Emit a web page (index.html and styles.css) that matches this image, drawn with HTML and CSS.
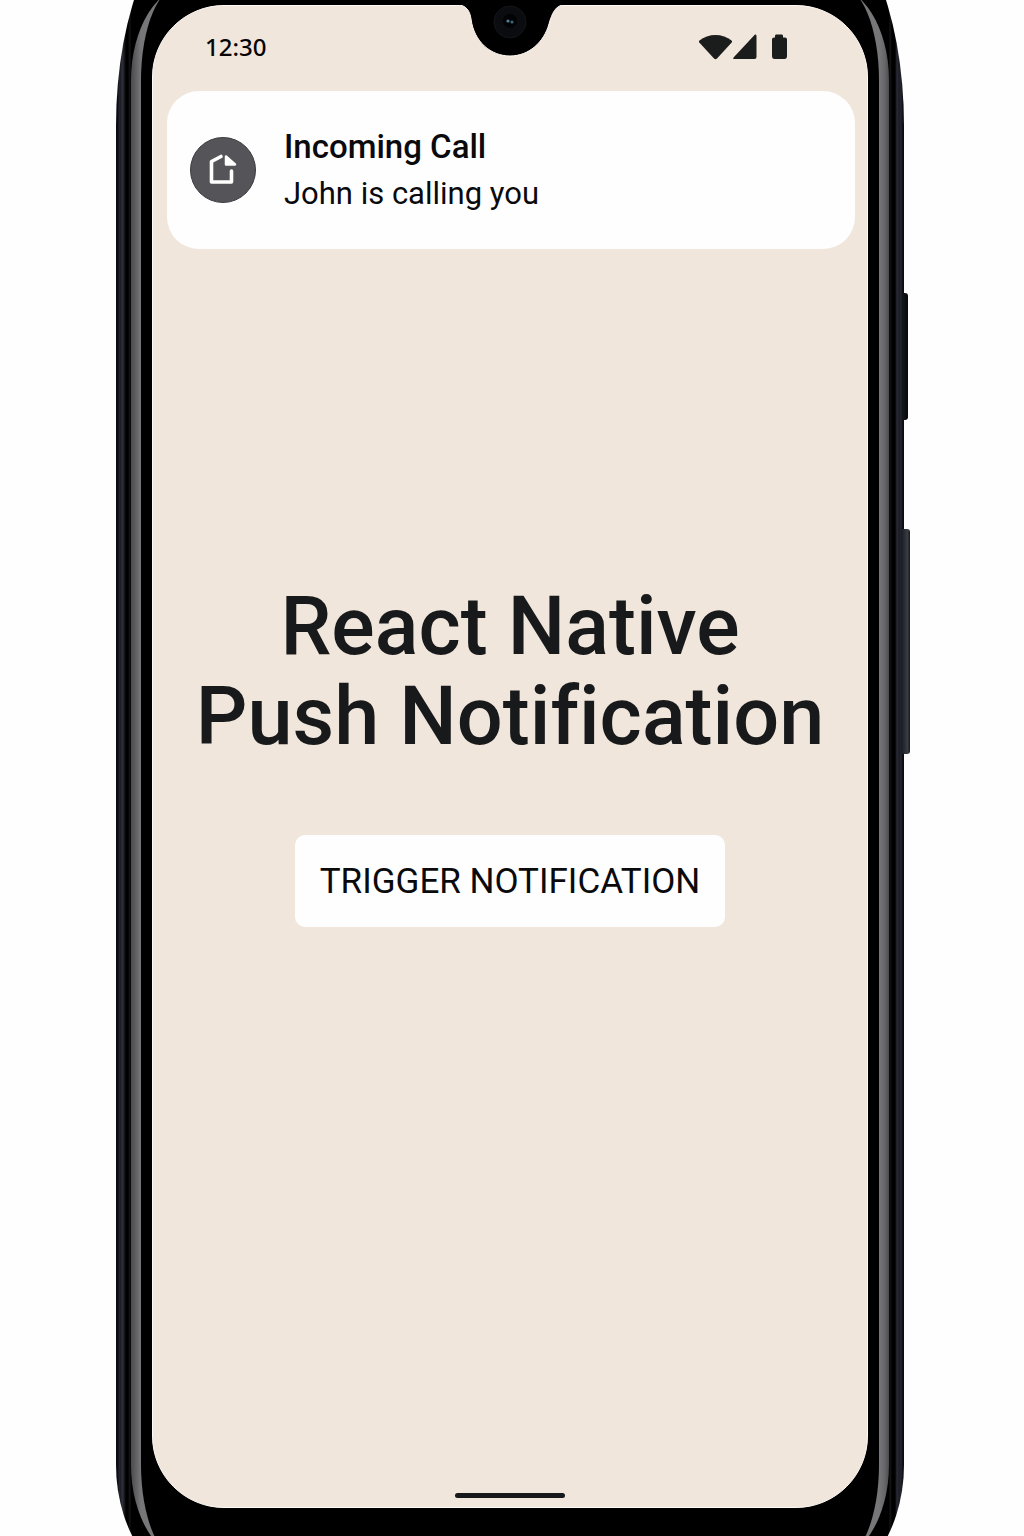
FILE: index.html
```html
<!DOCTYPE html>
<html lang="en">
<head>
<meta charset="utf-8">
<meta name="viewport" content="width=device-width, initial-scale=1">
<title>React Native Push Notification</title>
<link rel="stylesheet" href="styles.css">
</head>
<body>
<div class="stage">
  <div class="case">
    <span class="side-key side-key-power"></span>
    <span class="side-key side-key-volume"></span>
    <div class="rim">
      <div class="bezel">
        <div class="screen">
          <svg class="notch" viewBox="0 0 120 54" width="120" height="54" aria-hidden="true">
            <path d="M0 -2V0H8C16 0 20 6 21 14C24 37 41 51 60 51S94 37 99 19C102 8 106 0 114 0H120V-2Z" fill="#000" stroke="#fffaf5" stroke-width="1"/>
            <circle cx="60" cy="17" r="16" fill="#0b0c10" stroke="#14161a" stroke-width="1"/>
            <circle cx="60" cy="16" r="7" fill="#020305"/>
            <circle cx="58" cy="16" r="1.6" fill="#55809a"/>
            <circle cx="62" cy="17" r="1.6" fill="#3f6478"/>
          </svg>
          <header class="status-bar">
            <time class="clock">12:30</time>
            <svg class="status-icons" viewBox="0 0 90 26" width="90" height="26" aria-hidden="true">
              <path d="M1.500 6.500C10 -1 25 -1 33.500 6.500Q34.500 7.500 33.700 8.500L19 24.500Q17.500 26 16 24.500L1.300 8.500Q0.500 7.500 1.500 6.500Z"/>
              <path d="M57 0.500Q58.500 0 58.500 2V23Q58.500 25 56.500 25H36.500Q34 25 36 23Z"/>
              <path d="M78 0.500H84Q85 0.500 85 2V3.500H87Q89 3.500 89 5.500V22Q89 25 86.500 25H76.500Q74 25 74 22V5.500Q74 3.500 76 3.500H77V2Q77 0.500 78 0.500Z"/>
            </svg>
          </header>
          <section class="notification">
            <svg class="notification-icon" viewBox="0 0 66 66" width="66" height="66" aria-hidden="true">
              <circle cx="33" cy="33" r="32.500" fill="#555459" stroke="#3c3b40"/>
              <path d="M31 19.500L21.500 24.500V45H41.500V34" fill="none" stroke="#fff" stroke-width="3.600" stroke-linecap="round" stroke-linejoin="round"/>
              <path d="M36 19.500L45 27.500H36Z" fill="#fff" stroke="#fff" stroke-width="2.500" stroke-linejoin="round"/>
            </svg>
            <div class="notification-text">
              <h2 class="notification-title">Incoming Call</h2>
              <p class="notification-body">John is calling you</p>
            </div>
          </section>
          <main class="content">
            <h1 class="heading">React Native<br>Push Notification</h1>
            <button class="trigger" type="button">TRIGGER NOTIFICATION</button>
          </main>
          <div class="home-bar"></div>
        </div>
      </div>
    </div>
  </div>
</div>
</body>
</html>
```
FILE: styles.css
```css
* {
  box-sizing: border-box;
}

body {
  margin: 0;
  background: #fefefe;
  color: #17191a;
  font-family: Roboto, "Liberation Sans", sans-serif;
}

.stage {
  display: flex;
  min-height: 100vh;
  padding: 0 120px 0 116px;
  overflow: hidden;
}

/* The phone runs past the top and bottom edges of the stage */
.case {
  position: relative;
  display: flex;
  flex: 1;
  margin: -90px 0 -59px;
  padding: 75px 15px 35px;
  border-radius: 96px 96px 100px 100px / 216px 216px 130px 130px;
  background: linear-gradient(90deg,
    #0b0b12 0, #0b0b12 2px, #24242e 3px, #1c1c26 5px, #33333b 6px, #1d1d26 8px, #000 10px, #000 12px, #17171a 14px, #000 15px,
    #000 calc(100% - 15px), #17171a calc(100% - 14px), #000 calc(100% - 12px), #000 calc(100% - 9px),
    #2b2b35 calc(100% - 7px), #1c1c26 calc(100% - 5px), #24242e calc(100% - 3px), #0b0b12 calc(100% - 1px));
}

.rim {
  display: flex;
  flex: 1;
  padding: 0 10px;
  border-radius: 60px / 95px;
  background: linear-gradient(90deg,
    #4b4b4d 0, #5c5c5e 4px, #77777a 10px,
    #77777a calc(100% - 10px), #66666a calc(100% - 4px), #4b4b4d 100%);
}

.bezel {
  display: flex;
  flex: 1;
  padding: 20px 11px 52px;
  border-radius: 40px / 95px;
  background: #000;
}

.screen {
  position: relative;
  display: flex;
  flex: 1;
  flex-direction: column;
  padding: 0 14px;
  border: 1px solid #fffaf5;
  border-radius: 72px;
  background: #f1e6dc;
}

.side-key {
  position: absolute;
  left: 100%;
  margin-left: -2px;
  border-radius: 0 3px 3px 0;
}

.side-key-power {
  top: 383px;
  width: 6px;
  height: 127px;
  background: linear-gradient(90deg, #15181a, #050708);
}

.side-key-volume {
  top: 619px;
  width: 8px;
  height: 225px;
  background: linear-gradient(90deg, #1b2026, #3a3e44 70%, #14161a);
}

.notch {
  position: absolute;
  top: -1px;
  left: 50%;
  margin-left: -60px;
}

.status-bar {
  display: flex;
  align-items: center;
  justify-content: space-between;
  height: 85px;
  padding: 0 65px 4px 38px;
}

.clock {
  color: #050505;
  font-family: "Noto Sans", sans-serif;
  font-size: 24px;
  font-weight: 500;
}

.status-icons {
  fill: #1b1c1c;
}

.notification {
  display: flex;
  gap: 28px;
  min-height: 158px;
  margin-right: -2px;
  padding: 32px 23px;
  border-radius: 32px;
  background: #fefefe;
}

.notification-icon {
  margin-top: 14px;
}

.notification-title,
.notification-body {
  margin: 0;
  color: #0a0a0c;
  line-height: 47px;
}

.notification-title {
  font-size: 33px;
  font-weight: 500;
}

.notification-body {
  font-size: 31px;
}

.content {
  display: flex;
  flex: 1;
  flex-direction: column;
  align-items: center;
  padding-top: 333px;
}

.heading {
  margin: 0;
  font-size: 81px;
  font-variant-ligatures: none;
  font-weight: 500;
  line-height: 90px;
  text-align: center;
  white-space: nowrap;
}

.trigger {
  min-width: 430px;
  height: 92px;
  margin-top: 73px;
  padding: 0 24px;
  border: 0;
  border-radius: 10px;
  background: #fefefe;
  color: #0a0a0c;
  font-family: inherit;
  font-size: 35px;
  white-space: nowrap;
}

.home-bar {
  align-self: center;
  width: 110px;
  height: 5px;
  margin-bottom: 9px;
  border-radius: 3px;
  background: #17191a;
}
```
